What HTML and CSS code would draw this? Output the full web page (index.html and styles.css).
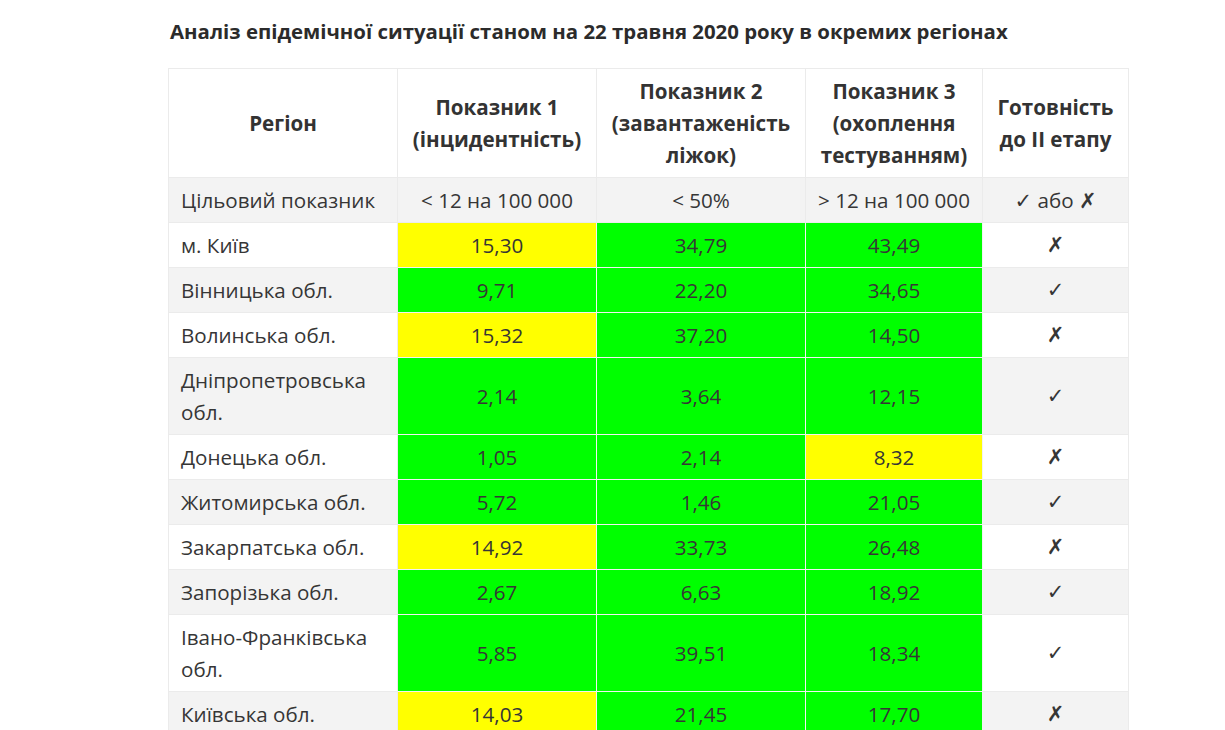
FILE: index.html
```html
<!DOCTYPE html>
<html lang="uk">
<head>
<meta charset="utf-8">
<link rel="stylesheet" href="styles.css">
</head>
<body>
<div class="page">
  <h2 class="title">Аналіз епідемічної ситуації станом на 22 травня 2020 року в окремих регіонах</h2>
  <table class="data">
    <colgroup>
      <col class="c1"><col class="c2"><col class="c3"><col class="c4"><col class="c5">
    </colgroup>
    <thead>
      <tr>
        <th>Регіон</th>
        <th>Показник 1<br>(інцидентність)</th>
        <th>Показник 2<br>(завантаженість<br>ліжок)</th>
        <th>Показник 3<br>(охоплення<br>тестуванням)</th>
        <th>Готовність<br>до ІІ етапу</th>
      </tr>
    </thead>
    <tbody>
      <tr class="odd"><td class="reg">Цільовий показник</td><td>&lt; 12 на 100 000</td><td>&lt; 50%</td><td>&gt; 12 на 100 000</td><td><span class="mark">✓</span> або <span class="mark">✗</span></td></tr>
      <tr><td class="reg">м. Київ</td><td class="y">15,30</td><td class="g">34,79</td><td class="g">43,49</td><td class="mark">✗</td></tr>
      <tr class="odd"><td class="reg">Вінницька обл.</td><td class="g">9,71</td><td class="g">22,20</td><td class="g">34,65</td><td class="mark">✓</td></tr>
      <tr><td class="reg">Волинська обл.</td><td class="y">15,32</td><td class="g">37,20</td><td class="g">14,50</td><td class="mark">✗</td></tr>
      <tr class="odd"><td class="reg">Дніпропетровська обл.</td><td class="g">2,14</td><td class="g">3,64</td><td class="g">12,15</td><td class="mark">✓</td></tr>
      <tr><td class="reg">Донецька обл.</td><td class="g">1,05</td><td class="g">2,14</td><td class="y">8,32</td><td class="mark">✗</td></tr>
      <tr class="odd"><td class="reg">Житомирська обл.</td><td class="g">5,72</td><td class="g">1,46</td><td class="g">21,05</td><td class="mark">✓</td></tr>
      <tr><td class="reg">Закарпатська обл.</td><td class="y">14,92</td><td class="g">33,73</td><td class="g">26,48</td><td class="mark">✗</td></tr>
      <tr class="odd"><td class="reg">Запорізька обл.</td><td class="g">2,67</td><td class="g">6,63</td><td class="g">18,92</td><td class="mark">✓</td></tr>
      <tr><td class="reg">Івано-Франківська обл.</td><td class="g">5,85</td><td class="g">39,51</td><td class="g">18,34</td><td class="mark">✓</td></tr>
      <tr class="odd"><td class="reg">Київська обл.</td><td class="y">14,03</td><td class="g">21,45</td><td class="g">17,70</td><td class="mark">✗</td></tr>
    </tbody>
  </table>
</div>
</body>
</html>
```
FILE: styles.css
```css
html, body {
  margin: 0;
  background: #fff;
}
body {
  font-family: "Open Sans", "Noto Sans", "DejaVu Sans", sans-serif;
  color: #363636;
}
.page {
  padding: 17px 0 0 168px;
}
.title {
  margin: 0 0 23px 2px;
  font-size: 20.4px;
  line-height: 28px;
  font-weight: 700;
  color: #2b2b2b;
}
.data {
  width: 960px;
  border-collapse: collapse;
  table-layout: fixed;
  border: 1px solid #ebebeb;
  font-size: 20.6px;
  line-height: 32px;
}
.c1 { width: 229px; }
.c2 { width: 199px; }
.c3 { width: 209px; }
.c4 { width: 177px; }
.c5 { width: 146px; }
.data th,
.data td {
  border: 1px solid #ebebeb;
  padding: 6px 12px;
  text-align: center;
  vertical-align: middle;
}
.data td {
  height: 32px;
}
.data th {
  font-weight: 700;
  color: #333;
}
.data td.reg {
  text-align: left;
}
.data tr.odd td {
  background: #f3f3f3;
}
.data tr td.y { background: #ffff00; }
.data tr td.g { background: #00ff00; }
.data td.g, .data td.y {
  border-color: #f2f2f2;
}
.mark {
  font-family: "DejaVu Sans", sans-serif;
  font-size: 21px;
}
span.mark {
  line-height: 1;
}
```
